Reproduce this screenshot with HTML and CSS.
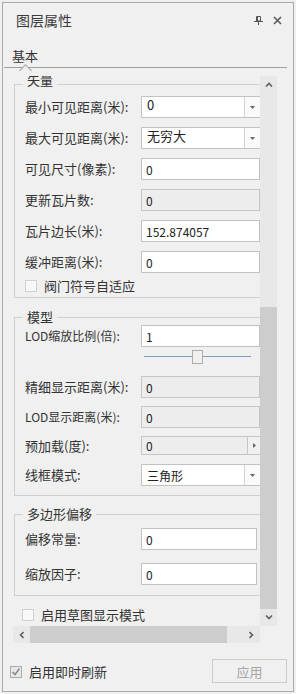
FILE: index.html
```html
<!DOCTYPE html>
<html lang="zh-CN">
<head>
  <meta charset="UTF-8" />
  <meta name="viewport" content="width=device-width, initial-scale=1.0"/>
  <title>图层属性</title>
  <link rel="stylesheet" href="styles.css">
</head>
<body>
  <div class="panel">
    <div class="titlebar">
      <span class="title">图层属性</span>
      <span class="title-btns">
        <svg width="9" height="9" viewBox="0 0 9 9">
          <path d="M2.5 0.5h4v4.5h-4z" fill="none" stroke="#555"/>
          <path d="M3.5 1v4" stroke="#555"/>
          <path d="M0 5.5h9M4.5 5.5v3.5" stroke="#555"/>
        </svg>
        <svg width="9" height="9" viewBox="0 0 9 9">
          <path d="M1 1L8 8M8 1L1 8" stroke="#5a5a5a" stroke-width="1.6"/>
        </svg>
      </span>
    </div>

    <div class="tabstrip">
      <span class="tab">基本</span>
    </div>

    <div class="scroller">
      <div class="viewport">
        <div class="scroll-content">

          <!-- 矢量 -->
          <fieldset class="group group-vector">
            <legend>矢量</legend>
            <div class="row">
              <label>最小可见距离(米):</label>
              <div class="combo combo-top">
                <span class="combo-text">0</span>
                <span class="combo-btn"><svg width="5" height="3"><polygon points="0,0 5,0 2.5,3" fill="#666"/></svg></span>
              </div>
            </div>
            <div class="row">
              <label>最大可见距离(米):</label>
              <div class="combo combo-top">
                <span class="combo-text">无穷大</span>
                <span class="combo-btn"><svg width="5" height="3"><polygon points="0,0 5,0 2.5,3" fill="#666"/></svg></span>
              </div>
            </div>
            <div class="row">
              <label>可见尺寸(像素):</label>
              <div class="field">0</div>
            </div>
            <div class="row">
              <label>更新瓦片数:</label>
              <div class="field disabled">0</div>
            </div>
            <div class="row">
              <label>瓦片边长(米):</label>
              <div class="field">152.874057</div>
            </div>
            <div class="row">
              <label>缓冲距离(米):</label>
              <div class="field">0</div>
            </div>
            <div class="check-row">
              <span class="check"></span>
              <span>阀门符号自适应</span>
            </div>
          </fieldset>

          <!-- 模型 -->
          <fieldset class="group group-model">
            <legend>模型</legend>
            <div class="row">
              <label class="lod">LOD缩放比例(倍):</label>
              <div class="field">1</div>
            </div>
            <div class="slider-row">
              <div class="slider">
                <span class="slider-thumb"></span>
              </div>
            </div>
            <div class="row row-fine">
              <label>精细显示距离(米):</label>
              <div class="field disabled">0</div>
            </div>
            <div class="row row-tight">
              <label class="lod">LOD显示距离(米):</label>
              <div class="field disabled">0</div>
            </div>
            <div class="row row-tight row-spin">
              <label>预加载(度):</label>
              <div class="spin">
                <div class="field disabled">0</div>
                <span class="spin-btn"><svg width="3" height="5"><polygon points="0,0 3,2.5 0,5" fill="#666"/></svg></span>
              </div>
            </div>
            <div class="row">
              <label>线框模式:</label>
              <div class="combo">
                <span class="combo-text">三角形</span>
                <span class="combo-btn"><svg width="5" height="3"><polygon points="0,0 5,0 2.5,3" fill="#666"/></svg></span>
              </div>
            </div>
          </fieldset>

          <!-- 多边形偏移 -->
          <fieldset class="group group-offset">
            <legend>多边形偏移</legend>
            <div class="row">
              <label>偏移常量:</label>
              <div class="field field-narrow">0</div>
            </div>
            <div class="row">
              <label>缩放因子:</label>
              <div class="field field-narrow">0</div>
            </div>
          </fieldset>

          <div class="check-row sketch-row">
            <span class="check"></span>
            <span>启用草图显示模式</span>
          </div>

        </div>
      </div>

      <div class="vscroll">
        <span class="sb-btn"><svg width="8" height="5"><polyline points="1,4.5 4,1.5 7,4.5" fill="none" stroke="#606060" stroke-width="1.6"/></svg></span>
        <span class="sb-space-v"></span>
        <span class="sb-thumb-v"></span>
        <span class="sb-btn"><svg width="8" height="5"><polyline points="1,0.5 4,3.5 7,0.5" fill="none" stroke="#606060" stroke-width="1.6"/></svg></span>
      </div>
      <div class="hscroll">
        <span class="sb-btn"><svg width="5" height="8"><polyline points="4.5,1 1.5,4 4.5,7" fill="none" stroke="#606060" stroke-width="1.6"/></svg></span>
        <span class="sb-thumb-h"></span>
        <span class="sb-space-h"></span>
        <span class="sb-btn"><svg width="5" height="8"><polyline points="0.5,1 3.5,4 0.5,7" fill="none" stroke="#606060" stroke-width="1.6"/></svg></span>
      </div>
      <div class="corner"></div>
    </div>

    <div class="footer">
      <div class="check-row">
        <span class="check checked">
          <svg width="10" height="10" viewBox="0 0 10 10"><polyline points="1.5,5 4,7.5 8.5,1.5" fill="none" stroke="#8a8a8a" stroke-width="1.5"/></svg>
        </span>
        <span>启用即时刷新</span>
      </div>
      <button class="apply-btn" disabled>应用</button>
    </div>
  </div>
</body>
</html>
```

FILE: styles.css
```css
* {
  box-sizing: border-box;
}
body {
  margin: 0;
  background: #f0f0f0;
  font-family: "Noto Sans CJK SC", "Microsoft YaHei", sans-serif;
  font-size: 13px;
  color: #333;
}
.panel {
  margin: 2px;
  width: 292px;
  height: 690px;
  border: 1px solid #a9a9a9;
  background: #f0f0f0;
  display: flex;
  flex-direction: column;
}
.titlebar {
  height: 34px;
  flex: none;
  display: flex;
  align-items: center;
  justify-content: space-between;
  padding: 0 11px 0 13px;
}
.title {
  font-size: 14px;
  line-height: 16px;
  color: #3a3a3a;
}
.title-btns {
  display: flex;
  align-items: center;
  gap: 10px;
}
.title-btns svg {
  display: block;
}
.tabstrip {
  height: 31px;
  flex: none;
  margin: 0 6px 0 1px;
  padding: 9px 0 0 8px;
  border-bottom: 1px solid #a0a0a0;
}
.tab {
  position: relative;
  display: inline-block;
  line-height: 13px;
  color: #333;
}
.tab::after {
  content: "";
  position: absolute;
  left: 50%;
  top: 17px;
  width: 8px;
  height: 8px;
  margin-left: -4px;
  background: #f0f0f0;
  border-left: 1px solid #a0a0a0;
  border-top: 1px solid #a0a0a0;
  transform: rotate(45deg);
}
.scroller {
  flex: none;
  margin: 8px 15px 0 10px;
  display: grid;
  grid-template-columns: 247px 17px;
  grid-template-rows: 550px 17px;
}
.viewport {
  overflow: hidden;
}
.scroll-content {
  width: 285px;
  margin-top: -3px;
  padding-left: 1px;
}
.group {
  margin: 0;
  width: 272px;
  min-width: 0;
  border: 1px solid #cfcfcf;
  padding: 0 0 6px 10px;
}
.group legend {
  margin-left: -2px;
  padding: 0 4px 2px;
  line-height: 13px;
  font-size: 13px;
  color: #333;
}
.group-vector legend {
  padding-bottom: 10px;
}
.group-vector {
  padding-bottom: 5px;
}
.group-model {
  margin-top: 12px;
  padding-bottom: 9px;
}
.group-offset {
  margin-top: 11px;
  padding-top: 6px;
  padding-bottom: 10px;
}
.row {
  display: flex;
  align-items: center;
  height: 22px;
  margin-top: 9px;
}
.group legend + .row {
  margin-top: 0;
}
.group-offset .row {
  margin-top: 13px;
}
.row label {
  width: 116px;
  flex: none;
  line-height: 16px;
  white-space: nowrap;
  color: #333;
}
.row .lod {
  font-size: 12px;
}
.row-fine {
  margin-top: 12px;
}
.row-tight {
  margin-top: 8px;
}
.row-spin {
  height: 19px;
}
.field {
  width: 119px;
  height: 22px;
  flex: none;
  display: flex;
  align-items: center;
  padding: 0 4px;
  border: 1px solid #c2c2c2;
  background: #fff;
  font-size: 12px;
  color: #222;
}
.field.disabled {
  background: #ededed;
  border-color: #c6c6c6;
}
.field-narrow {
  width: 116px;
}
.combo {
  width: 120px;
  height: 22px;
  flex: none;
  display: flex;
  border: 1px solid #c2c2c2;
  background: #fff;
  font-size: 12px;
  color: #222;
}
.combo-text {
  flex: 1;
  display: flex;
  align-items: center;
  padding-left: 5px;
}
.combo-top .combo-text {
  align-items: flex-start;
  padding-top: 1px;
  line-height: 14px;
}
.combo-top .combo-text {
  font-size: 13px;
}
.combo-btn {
  width: 16px;
  flex: none;
  display: flex;
  align-items: center;
  justify-content: center;
  border-left: 1px solid #d2d2d2;
  background: #fafafa;
}
.combo-btn svg,
.spin-btn svg,
.sb-btn svg {
  display: block;
}
.spin {
  display: flex;
  height: 19px;
}
.spin .field {
  width: 107px;
  height: 19px;
}
.spin-btn {
  width: 14px;
  display: flex;
  align-items: center;
  justify-content: center;
  border: 1px solid #c6c6c6;
  border-left: none;
  background: #f0f0f0;
}
.slider-row {
  height: 14px;
  margin-top: 3px;
  padding-left: 119px;
}
.slider {
  position: relative;
  width: 107px;
  height: 14px;
}
.slider::before {
  content: "";
  position: absolute;
  left: 0;
  right: 0;
  top: 6px;
  height: 1px;
  background: #7e9ec8;
}
.slider-thumb {
  position: absolute;
  left: 48px;
  top: 0;
  width: 11px;
  height: 14px;
  border: 1px solid #adadad;
  background: #f0f0f0;
}
.check-row {
  display: flex;
  align-items: center;
  height: 13px;
  margin-top: 6px;
  white-space: nowrap;
  line-height: 13px;
}
.check {
  width: 12px;
  height: 12px;
  flex: none;
  margin-right: 7px;
  border: 1px solid #d0d0d0;
  background: #f8f8f8;
  display: flex;
  align-items: center;
  justify-content: center;
}
.check.checked {
  border-color: #ababab;
  background: #e8e8e8;
}
.check svg {
  display: block;
}
.sketch-row {
  margin-top: 12px;
  padding-left: 8px;
}
.vscroll {
  display: flex;
  flex-direction: column;
  background: #e8e8e8;
}
.hscroll {
  display: flex;
  background: #e8e8e8;
}
.sb-btn {
  width: 17px;
  height: 17px;
  flex: none;
  display: flex;
  align-items: center;
  justify-content: center;
}
.sb-space-v {
  height: 214px;
  flex: none;
}
.sb-thumb-v {
  height: 302px;
  flex: none;
  background: #cdcdcd;
}
.sb-thumb-h {
  width: 197px;
  flex: none;
  background: #cdcdcd;
}
.sb-space-h {
  flex: 1;
}
.corner {
  background: #f0f0f0;
}
.footer {
  display: flex;
  align-items: center;
  justify-content: space-between;
  padding: 16px 6px 0 7px;
}
.footer .check-row {
  margin-top: 1px;
}
.apply-btn {
  width: 75px;
  height: 24px;
  border: 1px solid #cccccc;
  background: #f0f0f0;
  color: #a6a6a6;
  font-family: "Noto Sans CJK SC", sans-serif;
  font-size: 13px;
  padding: 0;
}
```
